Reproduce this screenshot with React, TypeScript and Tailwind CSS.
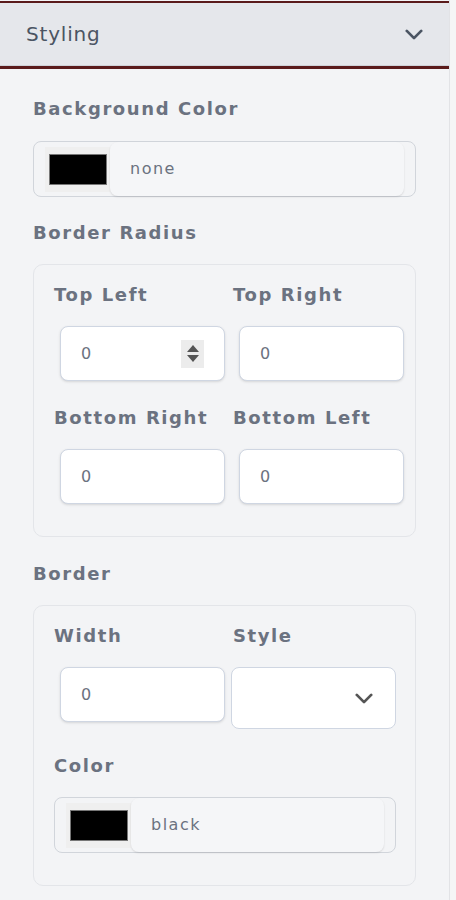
import React from 'react';

const font = { fontFamily: '"DejaVu Sans", "Open Sans", sans-serif' };

const Chevron = ({ className }: { className?: string }) => (
    <svg viewBox="0 0 20 12" className={className} fill="none" stroke="currentColor" strokeWidth={3} strokeLinecap="round" strokeLinejoin="round">
        <path d="M2 2l8 8 8-8" />
    </svg>
);

const Label = ({ children }: { children: React.ReactNode }) => (
    <div className="text-[18px] leading-7 font-bold text-[#6b7280] tracking-[1.6px] whitespace-nowrap">{children}</div>
);

const NumberInput = ({ spinner }: { spinner?: boolean }) => (
    <div className="ml-[6px] w-[165px] h-[55px] bg-white border border-[#cfd6e2] rounded-lg flex items-center pl-5 pr-5 shadow-sm">
        <span className="flex-1 text-base text-[#6b7280]">0</span>
        {spinner && (
            <div className="w-[23px] h-[28px] bg-[#ececec] flex flex-col items-center justify-center gap-[3px]">
                <svg width="12" height="7" viewBox="0 0 12 7"><path d="M6 0L12 7H0z" fill="#555" /></svg>
                <svg width="12" height="7" viewBox="0 0 12 7"><path d="M0 0h12L6 7z" fill="#555" /></svg>
            </div>
        )}
    </div>
);

const ColorField = ({ value }: { value: string }) => (
    <div className="w-full h-[56px] border border-[#d1d5db] rounded-lg flex items-center pl-[11px] pr-[11px]">
        <div className="w-[65px] h-[45px] bg-[#efefef] flex items-center justify-center shrink-0">
            <div className="w-[58px] h-[31px] bg-black border border-[#777]" />
        </div>
        <div className="flex-1 h-[54px] rounded-lg bg-[#f5f6f8] shadow-[0_1px_2px_rgba(0,0,0,0.12)] flex items-center pl-5 text-base text-[#6b7280] tracking-[1.5px]">
            {value}
        </div>
    </div>
);

export default function App() {
    return (
        <div className="flex min-h-[900px] bg-[#f5f5f6]" style={font}>
            <div className="w-[450px] shrink-0 bg-[#f3f4f6] border-r border-[#e2e3e6] pt-px pb-[14px]">
                {/* Header */}
                <div className="border-t-2 border-b-[3px] border-[#5a1b1b]">
                    <div className="h-[63px] bg-[#e5e7eb] border-b border-[#cfd2d8] flex items-center justify-between pl-[26px] pr-[26px]">
                        <span className="text-[20px] text-[#4b5563] tracking-[0.8px]">Styling</span>
                        <Chevron className="w-[18px] h-[11px] text-[#4b5563]" />
                    </div>
                </div>

                <div className="px-[33px]">
                    <div className="mt-[26px]"><Label>Background Color</Label></div>
                    <div className="mt-[18px]"><ColorField value="none" /></div>

                    <div className="mt-[22px]"><Label>Border Radius</Label></div>
                    <div className="mt-[17px] border border-[#e3e5e9] rounded-[10px] pl-5 pt-4 pb-8">
                        <div className="flex">
                            <div className="w-[179px]"><Label>Top Left</Label></div>
                            <div><Label>Top Right</Label></div>
                        </div>
                        <div className="flex mt-[17px]">
                            <div className="w-[179px]"><NumberInput spinner /></div>
                            <div><NumberInput /></div>
                        </div>
                        <div className="flex mt-[23px]">
                            <div className="w-[179px]"><Label>Bottom Right</Label></div>
                            <div><Label>Bottom Left</Label></div>
                        </div>
                        <div className="flex mt-[17px]">
                            <div className="w-[179px]"><NumberInput /></div>
                            <div><NumberInput /></div>
                        </div>
                    </div>

                    <div className="mt-[23px]"><Label>Border</Label></div>
                    <div className="mt-[17px] border border-[#e3e5e9] rounded-[10px] pl-5 pr-[19px] pt-4 pb-8">
                        <div className="flex">
                            <div className="w-[179px]"><Label>Width</Label></div>
                            <div><Label>Style</Label></div>
                        </div>
                        <div className="flex mt-[17px] items-start">
                            <div className="w-[178px]"><NumberInput /></div>
                            <div className="w-[165px] h-[62px] bg-white border border-[#cfd6e2] rounded-lg flex items-center justify-end pr-[22px]">
                                <Chevron className="w-[18px] h-[11px] text-[#555]" />
                            </div>
                        </div>
                        <div className="mt-[23px]"><Label>Color</Label></div>
                        <div className="mt-[17px]"><ColorField value="black" /></div>
                    </div>
                </div>
            </div>
            <div className="flex-1" />
        </div>
    );
}
